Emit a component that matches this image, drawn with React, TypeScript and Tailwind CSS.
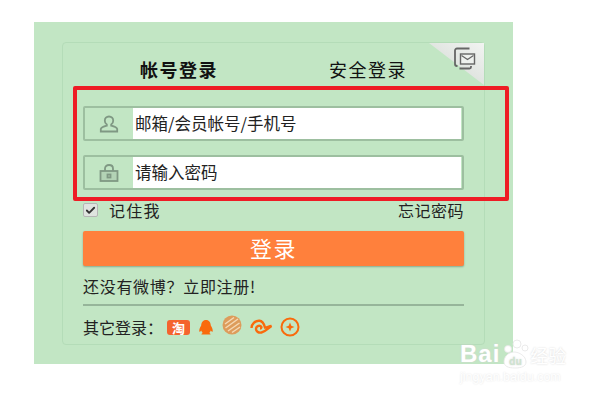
import { Check } from "lucide-react";

const font = { fontFamily: '"Noto Sans CJK SC", "Liberation Sans", sans-serif' };

function UserIcon() {
  return (
    <svg width="20" height="18" viewBox="0 0 20 18" fill="none" stroke="#7f9883" strokeWidth="1.8">
      <path d="M10 1.500c-2.600 0-4.200 1.900-4.200 4.200 0 1.700.8 3 2 3.800v1.200c-2.200.6-5.500 1.600-6 3.200v2.600h16.400v-2.600c-.5-1.600-3.800-2.600-6-3.200V9.500c1.200-.8 2-2.100 2-3.800 0-2.300-1.600-4.200-4.200-4.200z" />
    </svg>
  );
}

function LockIcon() {
  return (
    <svg width="20" height="18" viewBox="0 0 20 18" fill="none" stroke="#7f9883" strokeWidth="1.8">
      <path d="M6 7V4.500C6 2.500 7.700 1 10 1s4 1.500 4 3.500V7" />
      <rect x="1.500" y="7" width="17" height="10" fill="#a3bfa6" fillOpacity="0.5" />
      <rect x="8.500" y="10.500" width="3" height="3" />
    </svg>
  );
}

function Field({ icon, text }: { icon: React.ReactNode; text: string }) {
  return (
    <div className="flex h-[35px] w-[381px] rounded-[2px] border-2 border-[#9dbfa0] pr-[1px]">
      <div className="flex w-[48px] shrink-0 items-center justify-center">{icon}</div>
      <div className="flex flex-1 items-center bg-white pl-[2px] text-[16.5px] text-[#222]">{text}</div>
    </div>
  );
}

function SocialIcons() {
  return (
    <div className="flex items-center">
      <span className="flex h-[15px] w-[23px] items-center justify-center rounded-[3px] bg-[#f4632e] text-[13px] font-bold leading-none text-white">
        淘
      </span>
      <svg className="ml-[7px]" width="18" height="17" viewBox="0 0 18 17" fill="#f96a0c">
        <path d="M9 1C5.800 1 4.300 3.500 4.200 6.500 3 8.500 2 10.500 2.300 12.500c.8.5 1.500-.2 2-1 .3 1 .8 1.900 1.500 2.500-1 .4-1.500 1-1.300 1.500h9c.2-.5-.3-1.100-1.300-1.500.7-.6 1.200-1.500 1.500-2.500.5.8 1.200 1.500 2 1 .3-2-.7-4-1.900-6C13.700 3.500 12.200 1 9 1z" />
      </svg>
      <svg className="ml-[7px] -translate-y-[2px]" width="20" height="20" viewBox="0 0 20 20" fill="#dd9c5b">
        <circle cx="10" cy="10" r="9.500" />
        <path d="M3 9 12 2.500M3.500 13 16 4M6 16 17.500 8M10 17.500 18 12" stroke="#f4d9b5" strokeWidth="1.500" fill="none" />
      </svg>
      <svg className="ml-[8px]" width="23" height="16" viewBox="0 0 23 16" fill="none" stroke="#f96a0c" strokeWidth="2.400">
        <path d="M10 9.500c1.500 0 2-1.800.5-2.500-2-.9-4.500.6-4.500 3 0 2.500 2.500 4 5.500 3.500 4-.7 6-4 10-6.500-3 .5-4.500 1.500-6.500 1.500C14 5 13 2 9.500 1.800 5 1.500 1.500 5 1.500 9" />
      </svg>
      <svg className="ml-[7px]" width="20" height="20" viewBox="0 0 20 20" fill="none" stroke="#f96a0c" strokeWidth="2">
        <circle cx="10" cy="10" r="8.500" />
        <path d="M10 5.500 11.300 8.700 14.500 10 11.300 11.300 10 14.500 8.700 11.300 5.500 10 8.700 8.700z" fill="#f96a0c" stroke="none" />
      </svg>
    </div>
  );
}

function BaiduWatermark() {
  return (
    <div className="absolute left-[460px] top-[339px] w-[125px]">
      <div className="flex h-[30px] items-end text-white [text-shadow:0_0_2px_#d4d4d4]">
        <span className="text-[24px] font-bold leading-[30px] tracking-[1px]" style={{ fontFamily: '"Liberation Sans", sans-serif' }}>
          Bai
        </span>
        <svg className="ml-[2px]" width="27" height="30" viewBox="0 0 27 30" fill="#fff" stroke="#e6e6e6" strokeWidth="0.800">
          <circle cx="6" cy="10" r="3.500" />
          <circle cx="15" cy="5" r="4" />
          <circle cx="23" cy="9" r="3" />
          <path d="M2 23c0-6 5-10 10-10s12 4 12 10c0 4-4 6-11 6S2 27 2 23z" />
          <text x="7" y="26" fontSize="10" fontWeight="700" fill="#cfe3d0" stroke="none">du</text>
        </svg>
        <span className="ml-[1px] text-[18px] leading-[28px]">经验</span>
      </div>
      <div className="mt-[1px] text-[12.500px] leading-[14px] text-white [text-shadow:0_0_2px_#dedede]" style={{ fontFamily: '"Liberation Sans", sans-serif' }}>
        jingyan.baidu.com
      </div>
    </div>
  );
}

export default function App() {
  return (
    <div className="relative h-[400px] w-[600px] overflow-hidden bg-white pl-[34px] pt-[22px]" style={font}>
      <div className="h-[342px] w-[479px] bg-[#c2e6c4] pl-[28px] pt-[20px]">
        {/* Card */}
        <div className="relative h-[303px] w-[423px] rounded-[4px] border border-[#b4dcb8] px-[20px]">
          {/* Corner fold */}
          <div className="absolute right-0 top-0 h-[42px] w-[55px] bg-[linear-gradient(215deg,#f2f4f2_0%,#d0d6d0_100%)] [clip-path:polygon(0_0,100%_0,100%_100%)]" />
          <svg className="absolute right-[8px] top-[4px]" width="23" height="24" viewBox="0 0 22 24" fill="none" stroke="#666" strokeWidth="1.800">
            <path d="M16 1.500H3.500a2 2 0 0 0-2 2V17a2 2 0 0 0 2 2H4M6 21.500h10a1.500 1.500 0 0 0 1.500-1.500v-1" />
            <rect x="7" y="7" width="14" height="10" fill="#eef1ee" strokeWidth="1.400" />
            <path d="M8 8.500 14 12.500 20 8.500" strokeWidth="1.200" />
          </svg>

          {/* Tabs */}
          <div className="flex h-[63px] items-center pb-[10px] text-[#111]">
            <span className="ml-[57px] w-[80px] text-[18px] font-bold tracking-[1.500px]">帐号登录</span>
            <span className="ml-[109px] text-[18px] tracking-[1.500px]">安全登录</span>
          </div>

          {/* Fields */}
          <div className="flex flex-col gap-[14px]">
            <Field icon={<UserIcon />} text="邮箱/会员帐号/手机号" />
            <Field icon={<LockIcon />} text="请输入密码" />
          </div>

          {/* Remember */}
          <div className="mt-[10px] flex h-[20px] w-[381px] items-center justify-between text-[16px] text-[#222]">
            <div className="flex items-center">
              <span className="flex h-[14px] w-[15px] items-center justify-center rounded-[2px] border border-[#b5b5b5] bg-[#dfe4df]">
                <Check size={11} strokeWidth={4} color="#333" />
              </span>
              <span className="ml-[11px] tracking-[1.300px]">记住我</span>
            </div>
            <span className="tracking-[0.5px]">忘记密码</span>
          </div>

          {/* Login button */}
          <div className="mt-[11px] flex h-[35px] w-[381px] items-center justify-center rounded-[2px] bg-[#ff803c] pb-[2px] text-[22px] tracking-[1.500px] text-white shadow-[0_1px_2px_#8aa88c]">
            登录
          </div>

          <div className="mt-[8px] h-[24px] w-[381px] text-[16px] leading-[24px] tracking-[0.700px] text-[#222]">
            还没有微博？立即注册!
          </div>

          <div className="mt-[6px] h-[2px] w-[381px] bg-[#96b59a]" />

          {/* Other logins */}
          <div className="mt-[10px] flex h-[22px] items-center text-[16px] text-[#222]">
            <span className="mr-[4px]">其它登录：</span>
            <SocialIcons />
          </div>
        </div>
      </div>

      {/* Red annotation box */}
      <div className="absolute left-[73px] top-[86px] h-[115px] w-[436px] rounded-[2px] border-[4px] border-[#ee1c25]" />

      <BaiduWatermark />
    </div>
  );
}
